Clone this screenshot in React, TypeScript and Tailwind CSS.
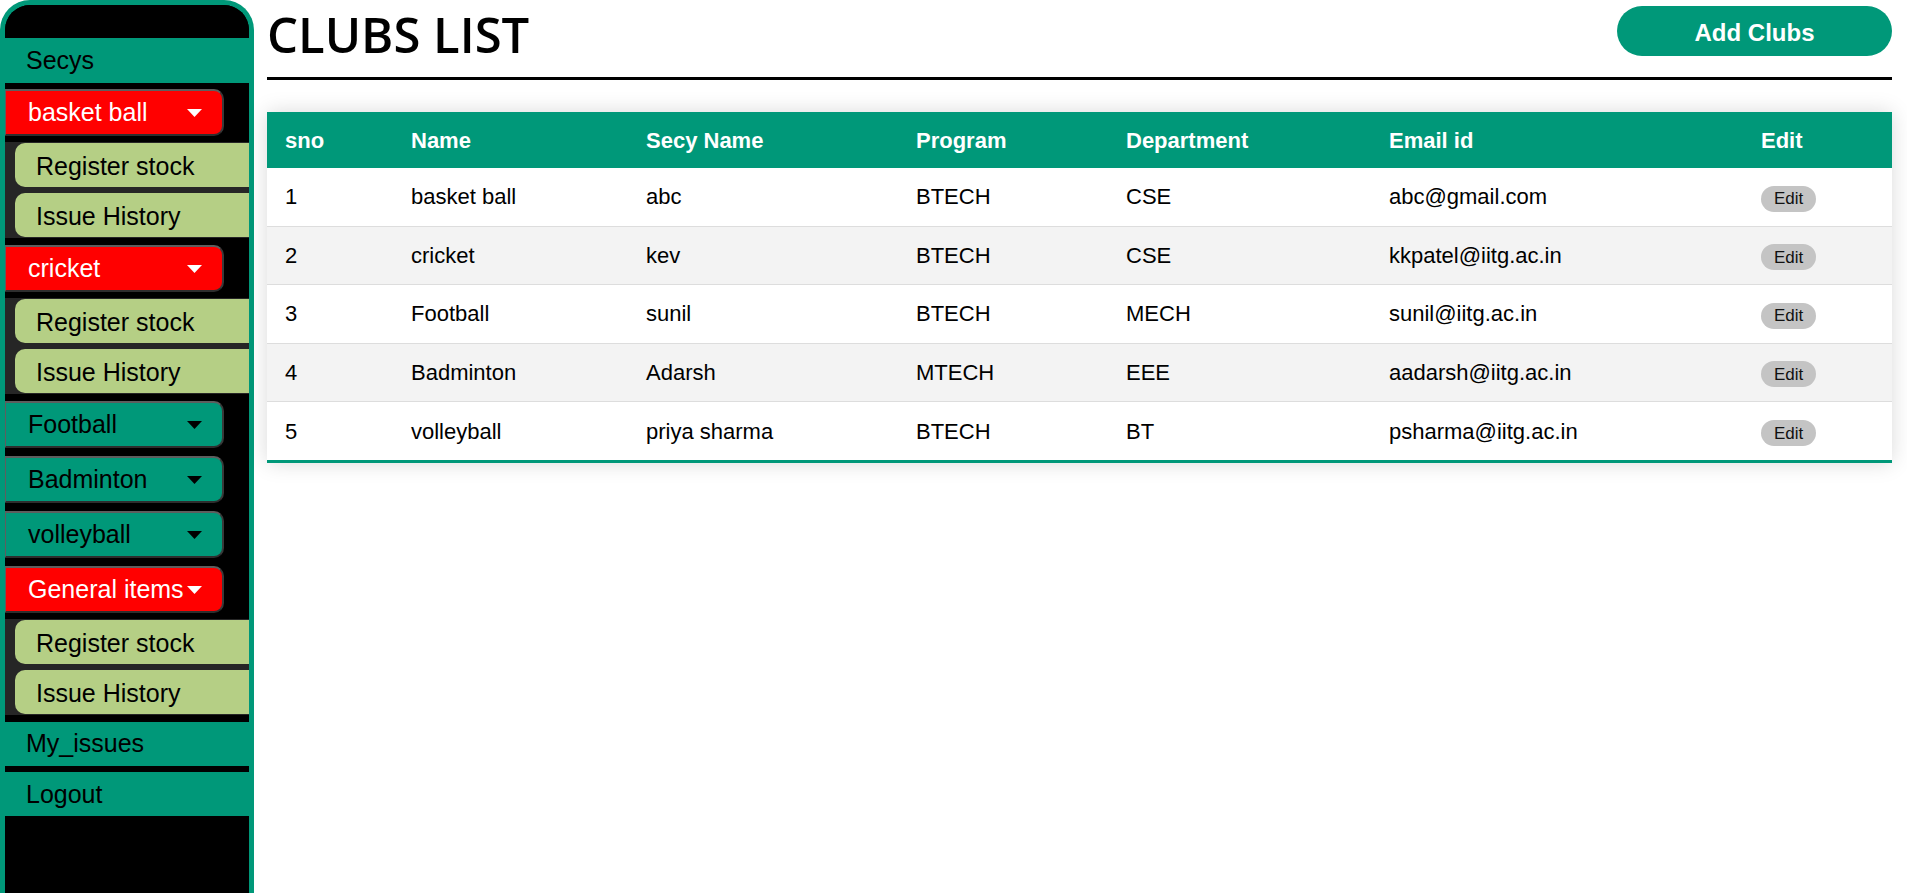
import React from "react";

type Club = { name: string; open: boolean; mt: string };

const clubs: Club[] = [
  { name: "basket ball", open: true, mt: "mt-[6px]" },
  { name: "cricket", open: true, mt: "mt-[7px]" },
  { name: "Football", open: false, mt: "mt-[7px]" },
  { name: "Badminton", open: false, mt: "mt-2" },
  { name: "volleyball", open: false, mt: "mt-2" },
  { name: "General items", open: true, mt: "mt-2" },
];

const rows = [
  ["1", "basket ball", "abc", "BTECH", "CSE", "abc@gmail.com"],
  ["2", "cricket", "kev", "BTECH", "CSE", "kkpatel@iitg.ac.in"],
  ["3", "Football", "sunil", "BTECH", "MECH", "sunil@iitg.ac.in"],
  ["4", "Badminton", "Adarsh", "MTECH", "EEE", "aadarsh@iitg.ac.in"],
  ["5", "volleyball", "priya sharma", "BTECH", "BT", "psharma@iitg.ac.in"],
];

const headers = ["sno", "Name", "Secy Name", "Program", "Department", "Email id", "Edit"];

const gridCols = "grid grid-cols-[126px_235px_270px_210px_263px_372px_149px]";

function Caret({ color }: { color: string }) {
  return (
    <svg width="15" height="8" viewBox="0 0 15 8" className="shrink-0">
      <polygon points="0,0 15,0 7.5,8" fill={color} />
    </svg>
  );
}

function Sidebar() {
  return (
    <aside className="w-[254px] h-[893px] shrink-0 border-[5px] border-b-0 border-[#009879] rounded-t-[30px] bg-black overflow-hidden font-['Liberation_Sans',Arial,sans-serif] text-[25px]">
      <div className="h-[33px] bg-black" />
      <div className="h-[45px] bg-[#009879] flex items-center pl-[21px] text-black">Secys</div>
      {clubs.map((c) => (
        <div key={c.name} className="flex flex-col">
          <div
            className={`${c.mt} h-[47px] w-[219px] rounded-r-[10px] border-2 border-l border-[#5e5e5e] border-b-[#2e2e2e] border-r-[#3a3a3a] flex items-center justify-between pl-[22px] pr-[20px] pt-[1px] ${
              c.open ? "bg-[#ff0000] text-white" : "bg-[#009879] text-black"
            }`}
          >
            <span className="whitespace-nowrap">{c.name}</span>
            <Caret color={c.open ? "#ffffff" : "#000000"} />
          </div>
          {c.open && (
            <div className="mt-[6px] bg-[#262626] pl-[10px] py-[1px] flex flex-col gap-[6px]">
              <div className="h-[44px] bg-[#b5cf85] rounded-l-[10px] flex items-center pl-[21px] pt-[3px] text-black whitespace-nowrap">
                Register stock
              </div>
              <div className="h-[44px] bg-[#b5cf85] rounded-l-[10px] flex items-center pl-[21px] pt-[3px] text-black whitespace-nowrap">
                Issue History
              </div>
            </div>
          )}
        </div>
      ))}
      <div className="mt-[7px] h-[44px] bg-[#009879] flex items-center pl-[21px] text-black">My_issues</div>
      <div className="mt-[6px] h-[44px] bg-[#009879] flex items-center pl-[21px] pt-[1px] text-black">Logout</div>
    </aside>
  );
}

export default function App() {
  return (
    <div className="flex w-[1907px] h-[893px] bg-white overflow-hidden">
      <Sidebar />
      <main className="flex-1 pl-[13px] pr-[15px]">
        <div className="flex justify-between items-start">
          <h1 className="pt-[10px] text-[49px] leading-none font-semibold font-['Open_Sans',sans-serif] text-black">
            CLUBS LIST
          </h1>
          <button className="mt-[6px] w-[275px] h-[50px] pt-[3px] rounded-full bg-[#009879] text-white font-bold text-[24px] font-['Liberation_Sans',Arial,sans-serif]">
            Add Clubs
          </button>
        </div>
        <div className="mt-[18px] h-[3px] bg-black" />
        <div className="mt-[32px] shadow-[0_0_20px_rgba(0,0,0,0.15)] font-['Liberation_Sans',Arial,sans-serif] text-[22px]">
          <div className={`${gridCols} h-[56px] bg-[#009879] text-white font-bold items-center`}>
            {headers.map((h) => (
              <div key={h} className="pl-[18px] whitespace-nowrap">
                {h}
              </div>
            ))}
          </div>
          {rows.map((r, i) => (
            <div
              key={r[0]}
              className={`${gridCols} items-center text-black ${i % 2 === 1 ? "bg-[#f3f3f3]" : "bg-white"} ${
                i === rows.length - 1 ? "h-[61px] border-b-[3px] border-[#009879]" : "h-[58.5px] border-b border-[#dddddd]"
              }`}
            >
              {r.map((cell, j) => (
                <div key={j} className="pl-[18px] whitespace-nowrap">
                  {cell}
                </div>
              ))}
              <div className="pl-[18px]">
                <button className="h-[26px] px-[13px] rounded-full bg-[#c4c4c4] text-[17px] leading-none text-[#111]">
                  Edit
                </button>
              </div>
            </div>
          ))}
        </div>
      </main>
    </div>
  );
}
